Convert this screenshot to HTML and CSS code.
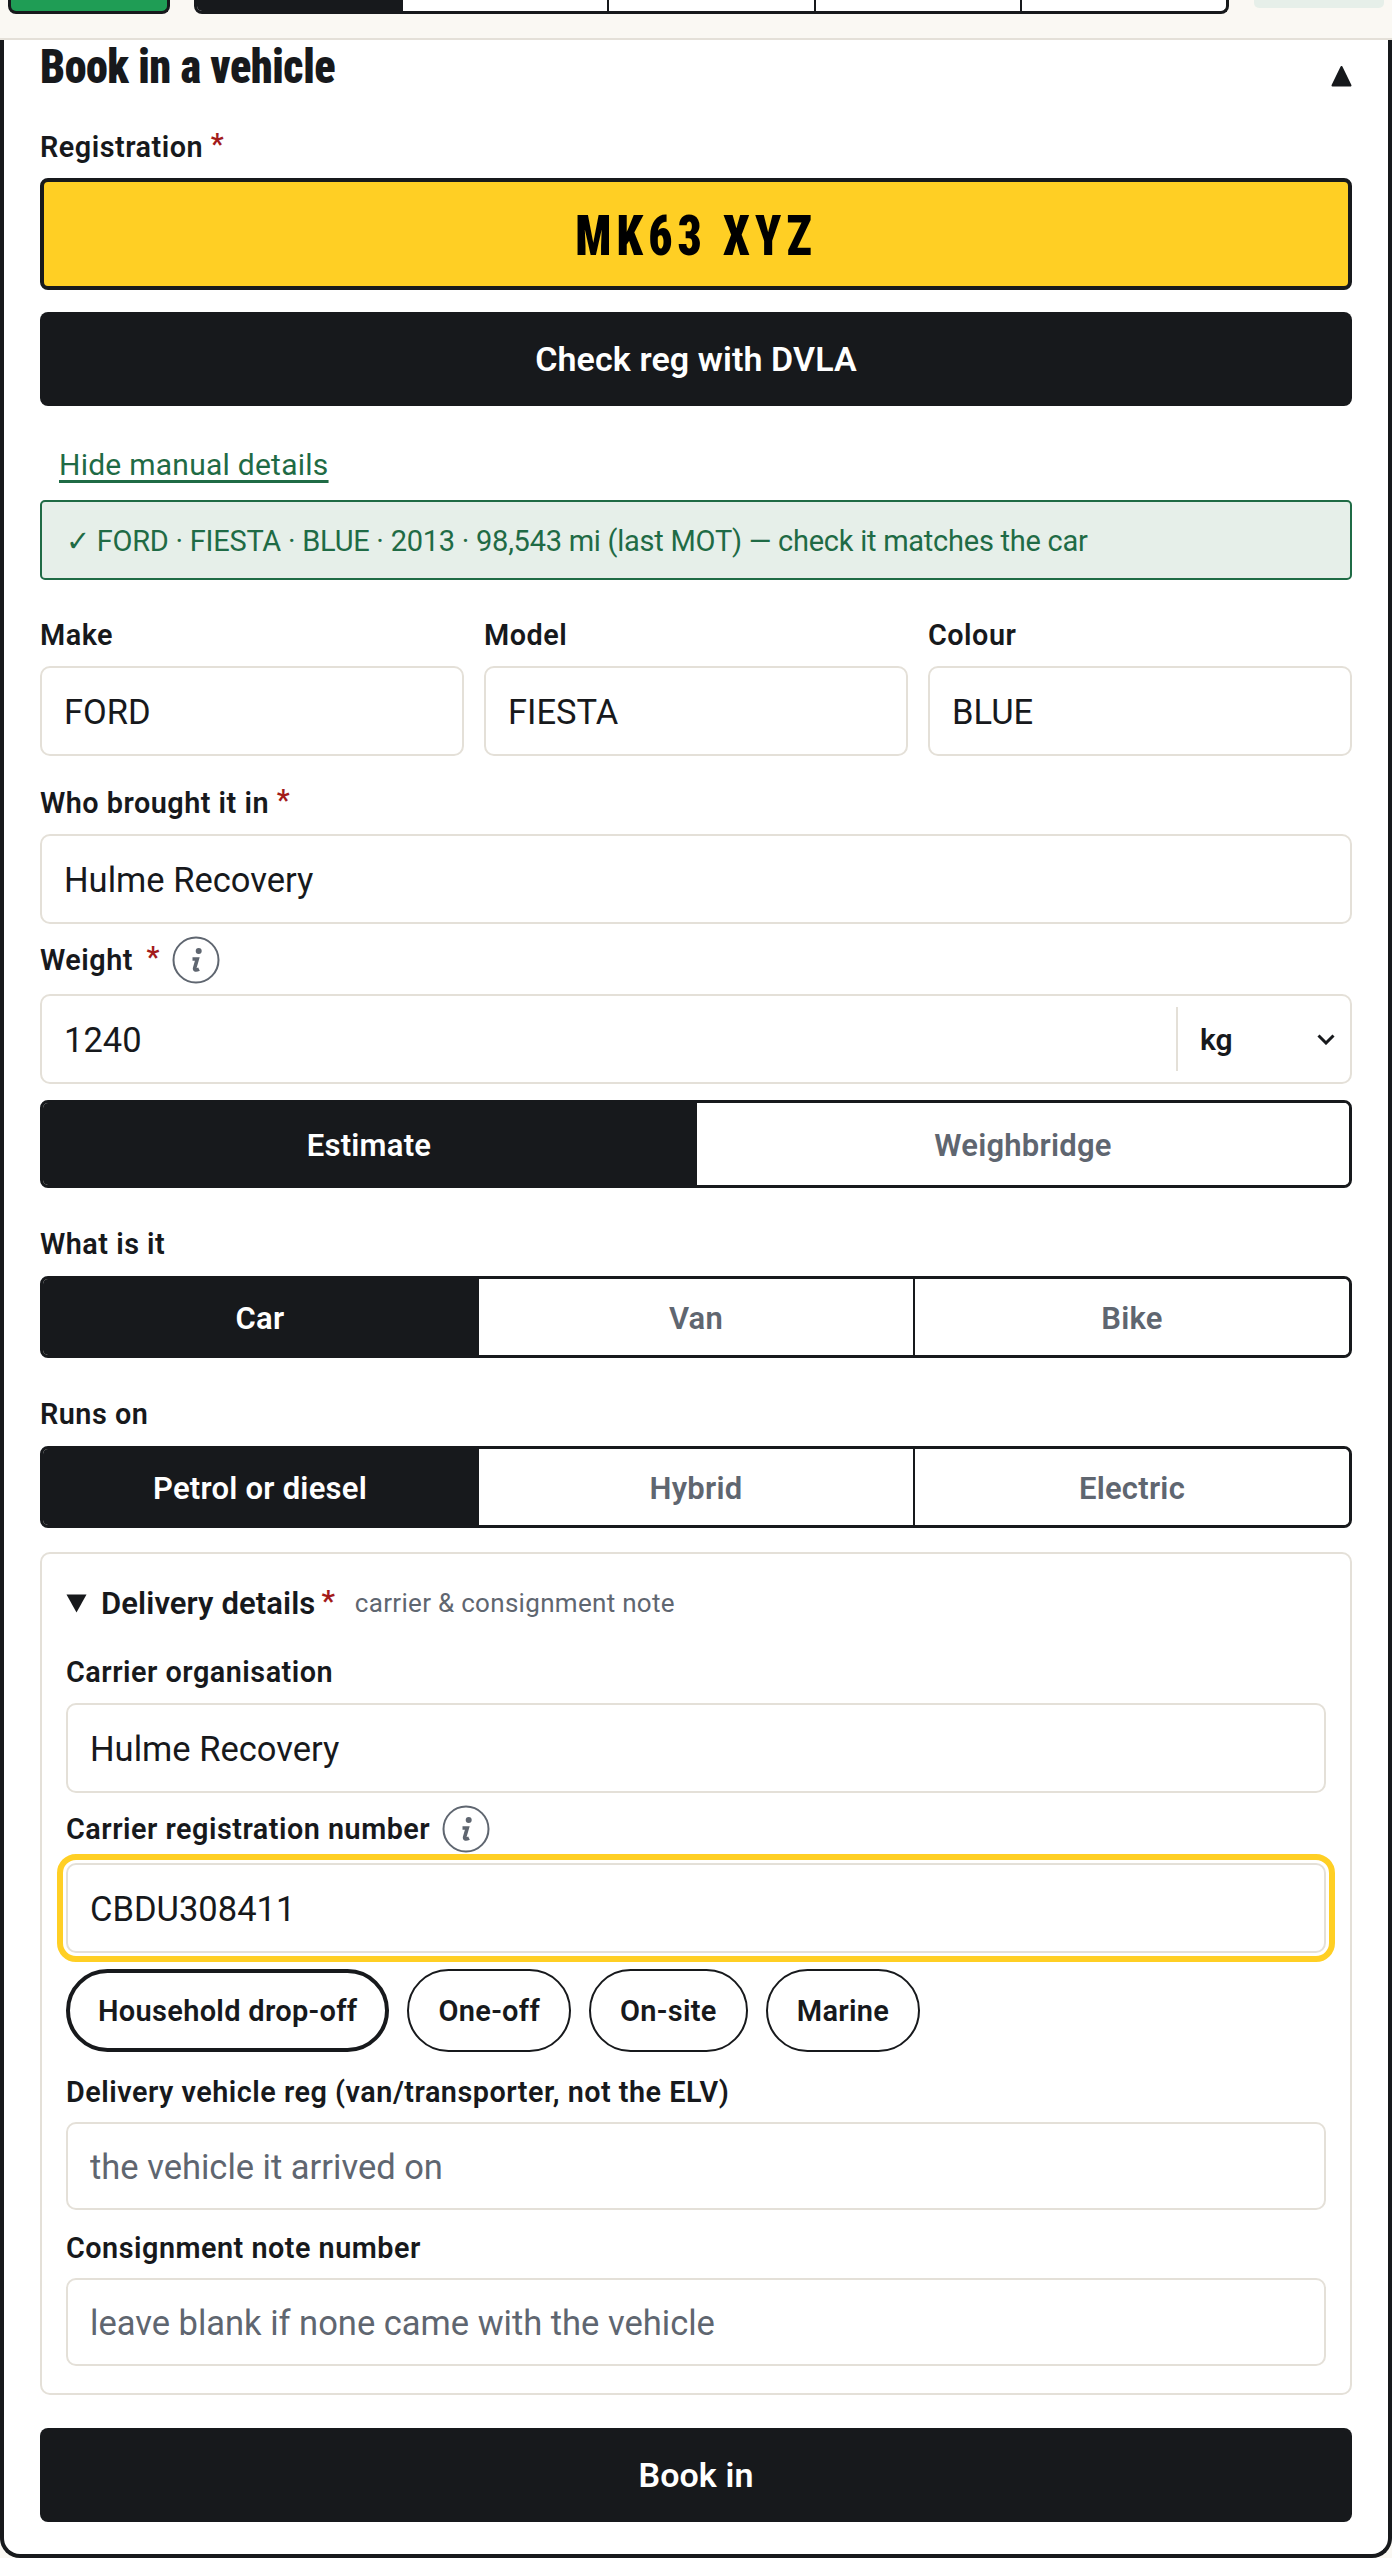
FILE: index.html
```
<!DOCTYPE html>
<html lang="en">
<head>
<meta charset="utf-8">
<title>Book in a vehicle</title>
<link rel="stylesheet" href="styles.css">
</head>
<body>
<header class="topbar">
  <div class="top-action"></div>
  <nav class="top-tabs">
    <span class="top-tab is-active"></span>
    <span class="top-tab"></span>
    <span class="top-tab"></span>
    <span class="top-tab"></span>
    <span class="top-tab"></span>
  </nav>
  <div class="top-status"></div>
</header>
<main class="card">
  <div class="card-head">
    <h1 class="title">Book in a vehicle</h1>
    <svg class="tri-up" viewBox="0 0 21 22"><path d="M10.5 2 L19.5 20.5 H1.5 Z" fill="#17191c" stroke="#17191c" stroke-width="2" stroke-linejoin="round"/></svg>
  </div>

  <label class="label label-first">Registration <span class="req">*</span></label>
  <div class="plate"><span class="plate-text">MK63 XYZ</span></div>
  <button class="btn btn-check">Check reg with DVLA</button>
  <div class="link-row"><a class="link">Hide manual details</a></div>
  <div class="notice">✓ FORD · FIESTA · BLUE · 2013 · 98,543 mi (last MOT) — check it matches the car</div>

  <div class="cols">
    <div><label class="label">Make</label><input class="input" value="FORD"></div>
    <div><label class="label">Model</label><input class="input" value="FIESTA"></div>
    <div><label class="label">Colour</label><input class="input" value="BLUE"></div>
  </div>

  <div class="field">
    <label class="label">Who brought it in <span class="req">*</span></label>
    <input class="input" value="Hulme Recovery">
  </div>

  <div class="field-info">
    <div class="label-row">
      <label class="label">Weight <span class="req req-gap">*</span></label>
      <svg class="info" viewBox="0 0 48 48"><circle cx="24" cy="24" r="22.5" fill="none" stroke="#5f6670" stroke-width="2"/><circle cx="26.7" cy="15" r="3" fill="#5f6670"/><path d="M20.5 23 h4.8 l-2.6 9 c-.6 2 1.2 2.7 4.3 1.1" fill="none" stroke="#5f6670" stroke-width="3.6"/></svg>
    </div>
    <div class="input-group">
      <input class="input-bare" value="1240">
      <div class="unit">
        <span>kg</span>
        <svg class="chev" viewBox="0 0 18 11"><path d="M1.5 1.5 L9 9 L16.5 1.5" fill="none" stroke="#17191c" stroke-width="3"/></svg>
      </div>
    </div>
  </div>

  <div class="seg seg-weigh">
    <button class="seg-btn is-on">Estimate</button>
    <button class="seg-btn">Weighbridge</button>
  </div>

  <label class="label label-seg">What is it</label>
  <div class="seg seg-3">
    <button class="seg-btn is-on">Car</button>
    <button class="seg-btn">Van</button>
    <button class="seg-btn">Bike</button>
  </div>

  <label class="label label-seg">Runs on</label>
  <div class="seg seg-3">
    <button class="seg-btn is-on">Petrol or diesel</button>
    <button class="seg-btn">Hybrid</button>
    <button class="seg-btn">Electric</button>
  </div>

  <section class="delivery">
    <div class="summary">
      <svg class="tri-down" viewBox="0 0 21 19"><path d="M0.5 0.5 H20.5 L10.5 18.5 Z" fill="#17191c"/></svg>
      <span class="summary-title">Delivery details</span><span class="req">*</span>
      <span class="summary-note">carrier &amp; consignment note</span>
    </div>

    <label class="label label-org">Carrier organisation</label>
    <input class="input" value="Hulme Recovery">

    <div class="field-info">
      <div class="label-row">
        <label class="label">Carrier registration number</label>
        <svg class="info" viewBox="0 0 48 48"><circle cx="24" cy="24" r="22.5" fill="none" stroke="#5f6670" stroke-width="2"/><circle cx="26.7" cy="15" r="3" fill="#5f6670"/><path d="M20.5 23 h4.8 l-2.6 9 c-.6 2 1.2 2.7 4.3 1.1" fill="none" stroke="#5f6670" stroke-width="3.6"/></svg>
      </div>
      <input class="input is-focus" value="CBDU308411">
    </div>

    <div class="chips">
      <button class="chip is-on">Household drop-off</button>
      <button class="chip">One-off</button>
      <button class="chip">On-site</button>
      <button class="chip">Marine</button>
    </div>

    <div class="field-sm">
      <label class="label">Delivery vehicle reg (van/transporter, not the ELV)</label>
      <input class="input" placeholder="the vehicle it arrived on">
    </div>
    <div class="field-sm">
      <label class="label">Consignment note number</label>
      <input class="input" placeholder="leave blank if none came with the vehicle">
    </div>
  </section>

  <button class="btn btn-book">Book in</button>
</main>
</body>
</html>
```
FILE: styles.css
```
* { box-sizing: border-box; }
html, body { margin: 0; padding: 0; }
body {
  background: #faf8f3;
  color: #17191c;
  font-family: Roboto, "Liberation Sans", sans-serif;
  height: 2558px;
  overflow: hidden;
}
.topbar {
  height: 40px;
  display: flex;
  align-items: flex-start;
  padding-left: 8px;
  background: #faf8f3;
  border-bottom: 2px solid #e4e0d8;
}
.top-action {
  width: 162px;
  height: 14px;
  background: #1f9d55;
  border: 3px solid #17191c;
  border-top: 0;
  border-radius: 0 0 8px 8px;
}
.top-tabs {
  margin-left: 24px;
  width: 1035px;
  height: 14px;
  display: flex;
  background: #fff;
  border: 3px solid #17191c;
  border-top: 0;
  border-radius: 0 0 8px 8px;
  overflow: hidden;
}
.top-tab { flex: 1; border-left: 2px solid #17191c; }
.top-tab.is-active { background: #17191c; border-left: 0; }
.top-status {
  margin-left: 25px;
  width: 130px;
  height: 8px;
  background: #e6efe9;
  border-radius: 0 0 5px 5px;
}
.card {
  height: 2518px;
  padding: 0 36px;
  background: #fff;
  border: 4px solid #17191c;
  border-top: 0;
  border-radius: 0 0 20px 20px;
}
.card-head {
  height: 50px;
  display: flex;
  justify-content: space-between;
  align-items: flex-end;
}
.title {
  margin: 0 0 -3px;
  font-size: 48px;
  line-height: 52px;
  font-weight: 900;
  font-stretch: 75%;
  letter-spacing: -0.5px;
  transform: scaleX(.92);
  transform-origin: left center;
}
.tri-up { width: 21px; height: 22px; margin-bottom: 3px; }
.label {
  display: block;
  height: 34px;
  line-height: 34px;
  font-size: 28.8px;
  font-weight: 600;
  letter-spacing: 0.5px;
  white-space: nowrap;
}
.label-first { margin-top: 40px; margin-bottom: 14px; }
.req { color: #a31b1b; font-weight: 600; position: relative; top: -3px; }
.req-gap { margin-left: 6px; }
.plate {
  height: 112px;
  display: flex;
  align-items: center;
  justify-content: center;
  background: #ffcf24;
  border: 4px solid #17191c;
  border-radius: 8px;
}
.plate-text {
  margin-top: 4px;
  font-size: 56px;
  font-weight: 900;
  font-stretch: 75%;
  letter-spacing: 6px;
  color: #000;
  transform: scaleX(.85);
}
.btn {
  display: block;
  width: 100%;
  height: 94px;
  background: #17191c;
  color: #fff;
  border: 0;
  border-radius: 8px;
  font-family: inherit;
  font-size: 34px;
  font-weight: 600;
  letter-spacing: 0.1px;
}
.btn-check { margin-top: 22px; }
.link-row { margin-top: 42px; padding-left: 19px; height: 34px; line-height: 34px; }
.link {
  color: #1f6b45;
  font-size: 30px;
  letter-spacing: 0.25px;
  text-decoration: underline;
  text-underline-offset: 5px;
}
.notice {
  margin-top: 18px;
  height: 80px;
  line-height: 78px;
  padding-left: 24px;
  background: #e6efe9;
  color: #1f6b45;
  border: 2px solid #1f6b45;
  border-radius: 5px;
  font-size: 29px;
  letter-spacing: -0.25px;
  white-space: nowrap;
}
.cols {
  margin-top: 38px;
  display: grid;
  grid-template-columns: repeat(3, 1fr);
  gap: 20px;
}
.cols .label { margin-bottom: 14px; }
.input {
  display: block;
  width: 100%;
  height: 90px;
  padding: 1px 22px 0;
  border: 2px solid #e4e0d8;
  border-radius: 10px;
  background: #fff;
  color: #17191c;
  font-family: inherit;
  font-size: 34.5px;
  outline: 0;
}
.input::placeholder { color: #5f6670; opacity: 1; }
.field { margin-top: 30px; }
.field .label { margin-bottom: 14px; }
.field-info { margin-top: 12px; }
.label-row {
  display: flex;
  align-items: center;
  gap: 12px;
  height: 48px;
  margin-bottom: 10px;
}
.info { width: 48px; height: 48px; flex: none; }
.input-group {
  height: 90px;
  display: flex;
  align-items: center;
  border: 2px solid #e4e0d8;
  border-radius: 10px;
}
.input-bare {
  flex: 1;
  min-width: 0;
  height: 64px;
  padding: 1px 22px 0;
  border: 0;
  border-right: 2px solid #e4e0d8;
  color: #17191c;
  font-family: inherit;
  font-size: 34.5px;
  outline: 0;
}
.unit {
  width: 172px;
  padding: 0 15px 0 22px;
  display: flex;
  justify-content: space-between;
  align-items: center;
  font-size: 30px;
  font-weight: 600;
}
.chev { width: 18px; height: 11px; }
.seg {
  display: flex;
  background: #fff;
  border: 3px solid #17191c;
  border-radius: 8px;
  overflow: hidden;
}
.seg-weigh { height: 88px; margin-top: 16px; }
.seg-3 { height: 82px; }
.seg-btn {
  flex: 1;
  min-width: 0;
  padding: 2px 0 0;
  border: 0;
  border-left: 2px solid #17191c;
  background: #fff;
  color: #5f6670;
  font-family: inherit;
  font-size: 31px;
  font-weight: 600;
  letter-spacing: 0.25px;
}
.seg-btn.is-on { background: #17191c; color: #fff; border-left: 0; }
.label-seg { margin-top: 39px; margin-bottom: 15px; }
.delivery {
  margin-top: 24px;
  height: 843px;
  padding: 0 24px;
  border: 2px solid #e4e0d8;
  border-radius: 10px;
}
.summary {
  padding-top: 28px;
  height: 70px;
  display: flex;
  align-items: center;
  white-space: nowrap;
}
.tri-down { width: 21px; height: 19px; margin-right: 14px; }
.summary-title { font-size: 31px; font-weight: 600; letter-spacing: 0.1px; }
.summary .req { font-size: 30px; margin-left: 6px; }
.summary-note { margin-left: 20px; font-size: 26px; letter-spacing: 0.3px; color: #5f6670; }
.label-org { margin-top: 31px; margin-bottom: 14px; }
.is-focus { outline: 6px solid #ffcf24; outline-offset: 3px; }
.chips { margin-top: 16px; display: flex; gap: 18px; }
.chip {
  height: 83px;
  padding: 0 29px;
  background: #fff;
  color: #17191c;
  border: 2px solid #17191c;
  border-radius: 42px;
  font-family: inherit;
  font-size: 29px;
  font-weight: 600;
  letter-spacing: 0.3px;
}
.chip.is-on { border-width: 4px; padding: 0 28px; }
.field-sm { margin-top: 23px; }
.field-sm + .field-sm { margin-top: 21px; }
.field-sm .label { margin-bottom: 13px; }
.field-sm .input { height: 88px; }
.btn-book { margin-top: 33px; }
```
